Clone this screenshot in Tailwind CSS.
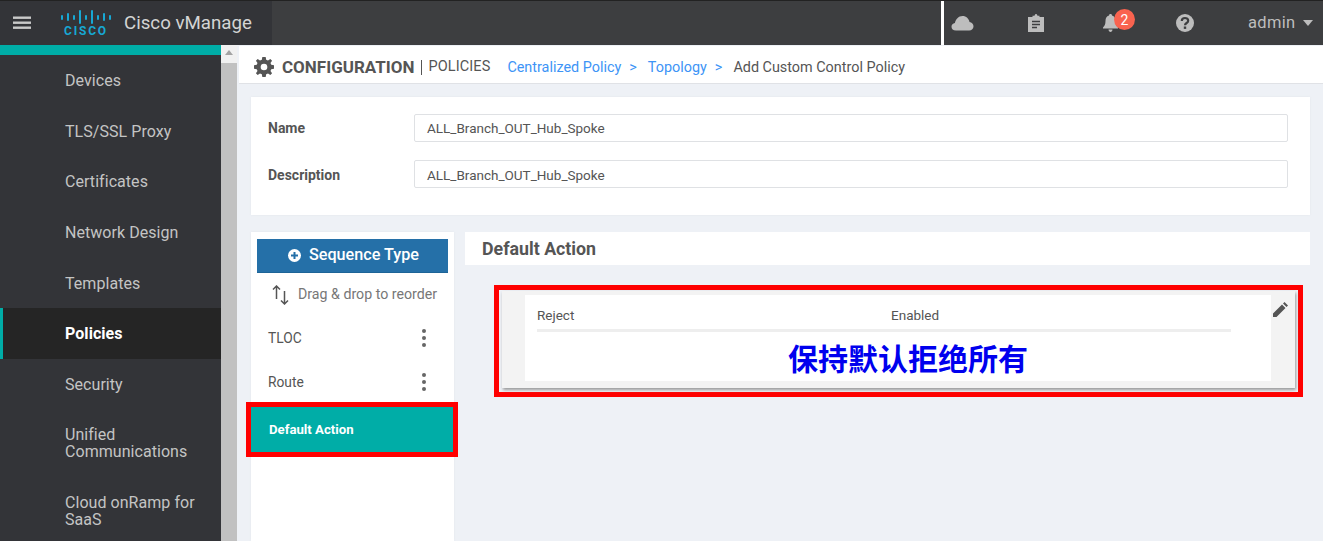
<!DOCTYPE html>
<html lang="en">
<head>
  <meta charset="UTF-8">
  <meta name="viewport" content="width=device-width, initial-scale=1.0">
  <title>Cisco vManage</title>
  <script src="https://cdn.jsdelivr.net/npm/@tailwindcss/browser@4"></script>
</head>
<body class="h-[541px] w-[1323px] overflow-hidden bg-[#eef1f6] font-['Roboto',sans-serif] text-[#555]">

<!-- Top bar -->
<header class="flex h-[45px] border-t border-t-[#222] bg-[#3d3e40]">
  <div class="flex w-[272px] items-center bg-[#333438]">
    <svg class="ml-[13px] h-[14px] w-[18px]" viewBox="0 0 18 14" fill="#c9c9c9"><rect width="18" height="2.4" y="0.5"/><rect width="18" height="2.4" y="5.5"/><rect width="18" height="2.4" y="10.5"/></svg>
    <div class="ml-[30px] flex w-[50px] flex-col items-center">
      <svg class="h-[14px] w-[50px]" viewBox="0 0 50 14" stroke="#17a8d4" stroke-width="2" stroke-linecap="round"><path d="M1 6v3M7 4v6M13 6v3M19 1v12M25 6v3M31 1v12M37 6v3M43 4v6M49 6v3"/></svg>
      <span class="mt-[2px] text-[12px] leading-[11px] font-bold tracking-[1.8px] text-[#17a8d4]">CISCO</span>
    </div>
    <span class="ml-[13px] text-[18.700px] leading-none whitespace-nowrap text-[#d4d4d4]">Cisco vManage</span>
  </div>
  <div class="ml-[669px] h-[44px] w-[3px] bg-white"></div>
  <div class="relative flex-1 text-[#bdbdbd]">
    <div class="flex h-[44px] items-center">
      <svg class="ml-[7px] h-[16px] w-[23px]" viewBox="0 0 23 16" fill="#bdbdbd"><path d="M5 15.500C2 15.500.5 13.700.5 11.700c0-2 1.500-3.500 3.400-3.700C4.500 4.500 7.500 1 11.500 1c3.700 0 6.500 2.700 7 6 2.300.3 4 2 4 4.300 0 2.400-1.800 4.200-4.300 4.200z"/></svg>
      <svg class="ml-[54px] h-[18px] w-[16px]" viewBox="0 0 16 18"><path fill="#bdbdbd" d="M0 3h4.500V1.800L6.500 1.800C6.800.6 7.400 0 8 0s1.200.6 1.500 1.800h2V3H16v15H0z"/><path stroke="#3d3e40" stroke-width="1.400" d="M4 7.500h8M4 10.500h8M4 13.500h5"/></svg>
      <svg class="ml-[59px] h-[18px] w-[15px]" viewBox="0 0 15 18" fill="#bdbdbd"><path d="M7.500 0c1 0 1.500.6 1.500 1.500 2.500.7 3.500 2.800 3.500 5.500 0 3.500 1 5 2.500 6.500v1H0v-1C1.500 12 2.500 10.500 2.500 7c0-2.700 1-4.800 3.500-5.500C6 .6 6.500 0 7.500 0zM5.500 15.500h4c0 1.500-1 2.500-2 2.500s-2-1-2-2.500z"/></svg>
      <svg class="ml-[58px] h-[18px] w-[18px]" viewBox="0 0 18 18"><circle cx="9" cy="9" r="9" fill="#bdbdbd"/><path fill="none" stroke="#3d3e40" stroke-width="2.200" d="M5.800 7c0-2 1.500-3 3.200-3s3.200 1 3.200 2.700c0 2.300-3.200 2.300-3.200 4.600"/><rect x="7.800" y="12.500" width="2.400" height="2.400" fill="#3d3e40"/></svg>
      <span class="ml-[54px] text-[16.500px] leading-none tracking-[0.3px]">admin</span>
      <span class="ml-[8px] h-0 w-0 border-x-[5px] border-t-[6px] border-x-transparent border-t-[#bdbdbd]"></span>
    </div>
    <span class="absolute top-[8px] left-[170px] flex h-[21px] w-[21px] items-center justify-center rounded-full bg-[#f9634f] text-[14px] leading-none text-white">2</span>
  </div>
</header>

<div class="flex h-[496px]">
  <!-- Sidebar -->
  <aside class="w-[221px] shrink-0 overflow-hidden bg-[#333438] text-[16px] leading-[17px] tracking-[0.05px] text-[#c4c4c4]">
    <div class="h-[10px] bg-[#00ada7]"></div>
    <nav class="flex flex-col">
      <a class="flex h-[50.700px] items-center pl-[65px]">Devices</a>
      <a class="flex h-[50.700px] items-center pl-[65px]">TLS/SSL Proxy</a>
      <a class="flex h-[50.700px] items-center pl-[65px]">Certificates</a>
      <a class="flex h-[50.700px] items-center pl-[65px]">Network Design</a>
      <a class="flex h-[50.700px] items-center pl-[65px]">Templates</a>
      <a class="flex h-[50.700px] items-center border-l-[3px] border-l-[#00ada7] bg-[#252525] pl-[62px] font-bold text-white">Policies</a>
      <a class="flex h-[50.700px] items-center pl-[65px]">Security</a>
      <a class="flex h-[66px] items-center pl-[65px]">Unified<br>Communications</a>
      <a class="flex h-[65px] items-start pt-[18px] pr-[20px] pl-[65px]">Cloud onRamp for SaaS</a>
    </nav>
  </aside>

  <!-- Scrollbar -->
  <div class="flex w-[16px] shrink-0 flex-col items-center bg-[#f1f1f1]">
    <span class="mt-[5px] h-0 w-0 border-x-[4.500px] border-b-[5px] border-x-transparent border-b-[#a3a3a3]"></span>
    <div class="mt-[8px] w-full flex-1 bg-[#c1c1c1]"></div>
  </div>

  <!-- Main -->
  <main class="min-w-0 flex-1">
    <div class="mt-[1px] ml-[2px] flex h-[38px] items-center border-b border-b-[#e0e2e6] bg-white pt-[5px]">
      <svg class="ml-[15px] h-[20px] w-[20px]" viewBox="0 0 24 24" fill="#555"><path fill-rule="evenodd" d="M10 0h4l.6 3.300 2.200.9L19.600 2.300l2.100 2.100-1.900 2.800.9 2.200L24 10v4l-3.300.6-.9 2.200 1.900 2.800-2.100 2.100-2.800-1.900-2.200.9L14 24h-4l-.6-3.300-2.200-.9-2.800 1.900-2.100-2.100 1.900-2.800-.9-2.200L0 14v-4l3.300-.6.9-2.200-1.900-2.800 2.100-2.100 2.800 1.900 2.200-.9zM12 8a4 4 0 1 0 0 8 4 4 0 0 0 0-8z"/></svg>
      <span class="ml-[8px] text-[17px] leading-none font-bold">CONFIGURATION</span>
      <span class="ml-[7px] h-[15px] w-px bg-[#555]"></span>
      <span class="ml-[6px] text-[14.500px] leading-none tracking-[0.1px]">POLICIES</span>
      <div class="mt-[2px] flex items-center text-[14.400px] leading-none">
        <span class="ml-[17px] text-[#3d94f6]">Centralized Policy</span>
        <span class="ml-[8px] text-[#3d94f6]">&gt;</span>
        <span class="ml-[11px] text-[#3d94f6]">Topology</span>
        <span class="ml-[8px] text-[#3d94f6]">&gt;</span>
        <span class="ml-[11px]">Add Custom Control Policy</span>
      </div>
    </div>

    <div class="mt-[13px] mr-[13px] ml-[14px] flex h-[118px] flex-col gap-[18px] bg-white pt-[17px] pr-[22px] pl-[17px] text-[13.500px] shadow-[0_0_2px_#e4e6ea]">
      <div class="flex items-center">
        <label class="w-[146px] text-[14px] font-bold">Name</label>
        <div class="flex h-[28px] flex-1 items-center rounded-[2px] border border-[#dfe1e4] pl-[12px]">ALL_Branch_OUT_Hub_Spoke</div>
      </div>
      <div class="flex items-center">
        <label class="mt-[2px] w-[146px] text-[14px] font-bold">Description</label>
        <div class="flex h-[28px] flex-1 items-center rounded-[2px] border border-[#dfe1e4] pt-[2px] pl-[12px]">ALL_Branch_OUT_Hub_Spoke</div>
      </div>
    </div>

    <div class="mt-[17px] flex">
      <!-- Sequence list -->
      <div class="ml-[14px] h-[309px] w-[203px] shrink-0 bg-white shadow-[0_0_2px_#e4e6ea]">
        <button class="mx-[6px] mt-[7px] flex h-[34px] w-[191px] items-center justify-center border-b border-b-[#1d6497] bg-[#2570a8] pl-[2px] text-[16.200px] font-medium text-white">
          <svg class="mr-[8px] h-[13px] w-[13px]" viewBox="0 0 13 13"><circle cx="6.500" cy="6.500" r="6.500" fill="#fff"/><path stroke="#2570a8" stroke-width="2" d="M6.500 3v7M3 6.500h7"/></svg>
          Sequence Type
        </button>
        <div class="mt-[8px] flex h-[27px] items-center pl-[21px] text-[14.200px] text-[#777]">
          <svg class="mr-[9px] h-[20px] w-[17px]" viewBox="0 0 17 20" fill="none" stroke="#555" stroke-width="1.500"><path d="M4.500 14V1M1 4.500 4.500 1 8 4.500M12.500 6v13M9 15.500l3.500 3.500 3.500-3.500"/></svg>
          Drag &amp; drop to reorder
        </div>
        <div class="mt-[16px] flex h-[28px] items-center justify-between pr-[28px] pl-[17px] text-[13.800px]">
          <span>TLOC</span>
          <span class="flex flex-col gap-[3px]"><i class="block h-[4px] w-[4px] rounded-full bg-[#666]"></i><i class="block h-[4px] w-[4px] rounded-full bg-[#666]"></i><i class="block h-[4px] w-[4px] rounded-full bg-[#666]"></i></span>
        </div>
        <div class="mt-[16px] flex h-[28px] items-center justify-between pr-[28px] pl-[17px] text-[13.800px]">
          <span>Route</span>
          <span class="flex flex-col gap-[3px]"><i class="block h-[4px] w-[4px] rounded-full bg-[#666]"></i><i class="block h-[4px] w-[4px] rounded-full bg-[#666]"></i><i class="block h-[4px] w-[4px] rounded-full bg-[#666]"></i></span>
        </div>
        <div class="mt-[6px] ml-[-5px] flex h-[55px] w-[212px] items-center border-[5px] border-[#ff0000] bg-[#00ada7] pl-[18px] text-[13.200px] font-bold text-white">Default Action</div>
      </div>

      <!-- Default action -->
      <div class="ml-[11px] min-w-0 flex-1 pr-[13px]">
        <div class="flex h-[33px] items-center bg-white pt-[2px] pl-[17px] text-[17.800px] font-bold">Default Action</div>
        <div class="mt-[20px] mr-[7px] ml-[29px] h-[112px] border-[5px] border-[#ff0000] pt-[1px] pr-[3px] pb-[4px] pl-[3px]">
          <div class="flex h-[97px] bg-[#f3f3f3] pt-[4px] pl-[23px] shadow-[1px_2px_3px_#999]">
            <div class="h-[86px] w-[746px] bg-white px-[12px] text-[13.500px]">
              <div class="mr-[28px] flex h-[37px] items-end border-b-[3px] border-b-[#eeeeee] pb-[4px]">
                <span class="w-[354px]">Reject</span>
                <span>Enabled</span>
              </div>
              <div class="mx-[-12px] pt-[6px] pl-[20px] text-center font-['Noto_Sans_CJK_SC',sans-serif] text-[30px] leading-[38px] font-bold text-[#0000ee]">保持默认拒绝所有</div>
            </div>
            <svg class="mt-[7px] ml-[2px] h-[15px] w-[15px]" viewBox="0 0 15 15" fill="#555"><path d="M0 15V11.500L9 2.500 12.500 6 3.500 15zM10 1.500 11.500 0 15 3.500 13.500 5z"/></svg>
          </div>
        </div>
      </div>
    </div>
  </main>
</div>

</body>
</html>
